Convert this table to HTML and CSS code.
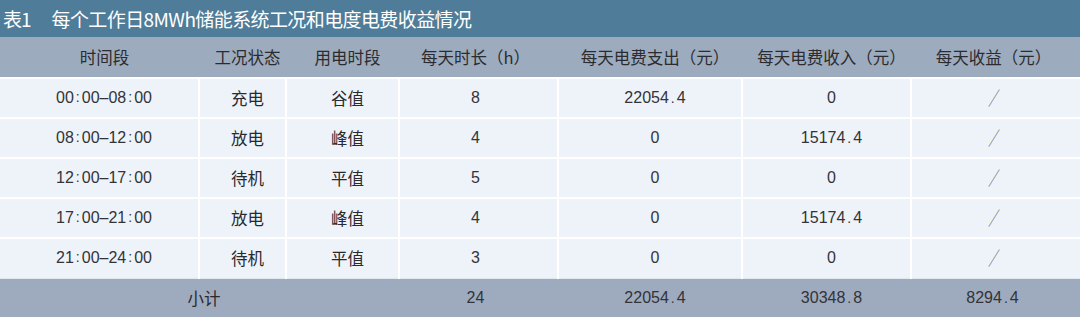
FILE: index.html
```html
<!DOCTYPE html>
<html lang="zh-CN">
<head>
<meta charset="utf-8">
<title>表1</title>
<link rel="stylesheet" href="styles.css">
</head>
<body>
<div class="sheet">
  <div class="caption"><span class="cap-no">表1</span><span class="cap-text">每个工作日8MWh储能系统工况和电度电费收益情况</span></div>
  <table class="grid">
    <colgroup>
      <col class="c1"><col class="c2"><col class="c3"><col class="c4"><col class="c5"><col class="c6"><col class="c7">
    </colgroup>
    <thead>
      <tr><th>时间段</th><th>工况状态</th><th>用电时段</th><th>每天时长（h）</th><th>每天电费支出（元）</th><th>每天电费收入（元）</th><th>每天收益（元）</th></tr>
    </thead>
    <tbody>
      <tr><td class="num">00<span class="colon">:</span>00–08<span class="colon">:</span>00</td><td class="zh">充电</td><td class="zh">谷值</td><td class="num">8</td><td class="num">22054<span class="dot">.</span>4</td><td class="num">0</td><td class="na"><span class="slash">／</span></td></tr>
      <tr><td class="num">08<span class="colon">:</span>00–12<span class="colon">:</span>00</td><td class="zh">放电</td><td class="zh">峰值</td><td class="num">4</td><td class="num">0</td><td class="num">15174<span class="dot">.</span>4</td><td class="na"><span class="slash">／</span></td></tr>
      <tr><td class="num">12<span class="colon">:</span>00–17<span class="colon">:</span>00</td><td class="zh">待机</td><td class="zh">平值</td><td class="num">5</td><td class="num">0</td><td class="num">0</td><td class="na"><span class="slash">／</span></td></tr>
      <tr><td class="num">17<span class="colon">:</span>00–21<span class="colon">:</span>00</td><td class="zh">放电</td><td class="zh">峰值</td><td class="num">4</td><td class="num">0</td><td class="num">15174<span class="dot">.</span>4</td><td class="na"><span class="slash">／</span></td></tr>
      <tr><td class="num">21<span class="colon">:</span>00–24<span class="colon">:</span>00</td><td class="zh">待机</td><td class="zh">平值</td><td class="num">3</td><td class="num">0</td><td class="num">0</td><td class="na"><span class="slash">／</span></td></tr>
    </tbody>
    <tfoot>
      <tr><td colspan="3" class="zh f1">小计</td><td class="num f4">24</td><td class="num f5">22054<span class="dot">.</span>4</td><td class="num f6">30348<span class="dot">.</span>8</td><td class="num f7">8294<span class="dot">.</span>4</td></tr>
    </tfoot>
  </table>
</div>
</body>
</html>
```
FILE: styles.css
```css
html, body {
  margin: 0;
  padding: 0;
  background: #eef3fa;
}
body {
  font-family: "Noto Sans CJK SC", "Noto Sans", sans-serif;
  color: #2f2f33;
}
.sheet {
  width: 1080px;
  height: 317px;
  overflow: hidden;
}
.caption {
  height: 37px;
  background: #4f7c99;
  color: #ffffff;
  font-size: 19px;
  display: flex;
  align-items: center;
  padding-left: 3px;
  box-sizing: border-box;
  gap: 21px;
}
.cap-no { letter-spacing: -1px; }
.cap-text { letter-spacing: -0.6px; }
.grid {
  width: 1080px;
  border-collapse: collapse;
  table-layout: fixed;
  font-size: 16px;
}
.c1 { width: 199px; }
.c2 { width: 87px; }
.c3 { width: 113px; }
.c4 { width: 159px; }
.c5 { width: 184px; }
.c6 { width: 169px; }
.c7 { width: 169px; }
.grid th {
  height: 40px;
  background: #9dabbe;
  font-weight: 400;
  font-size: 16.5px;
  padding: 0;
  text-align: center;
  color: #2c2c30;
}
.grid td {
  height: 40px;
  padding: 0;
  text-align: center;
  background: #eef3fa;
  border-top: 2px solid #ffffff;
  border-left: 2px solid #ffffff;
  box-sizing: border-box;
}
.grid tbody td:first-child { border-left: none; }
.grid th:nth-child(1), .grid tbody td:nth-child(1),
.grid th:nth-child(2), .grid tbody td:nth-child(2),
.grid th:nth-child(3), .grid tbody td:nth-child(3),
.grid th:nth-child(5), .grid tbody td:nth-child(5),
.grid th:nth-child(6), .grid tbody td:nth-child(6) {
  padding-left: 10px;
}
.grid th:nth-child(4), .grid tbody td:nth-child(4) { padding-right: 6px; }
.grid th:nth-child(7), .grid tbody td:nth-child(7) { padding-right: 4px; }
.grid td.zh {
  font-family: "Noto Sans CJK SC", sans-serif;
  font-size: 16.5px;
  color: #2a2a2e;
}
.grid td.num {
  font-family: "Liberation Sans", "Noto Sans CJK SC", sans-serif;
  font-size: 16px;
  color: #333338;
}
.colon {
  margin: 0 2px;
  font-size: 14px;
  position: relative;
  top: -1px;
}
.dot {
  margin: 0 2px;
  font-size: 14px;
}
.grid td.na {
  color: #5e5f66;
}
.slash {
  display: inline-block;
  font-size: 16px;
  font-weight: 300;
  transform: scale(0.75, 1.2);
}
.grid tfoot td {
  background: #9eabbe;
  border-left: none;
  border-top: 1px solid #dfe6ef;
  height: 40px;
}
.grid tfoot td.f1 { padding-left: 9px; }
.grid tfoot td.f4 { padding-right: 6px; }
.grid tfoot td.f5 { padding-left: 10px; }
.grid tfoot td.f6 { padding-left: 10px; }
.grid tfoot td.f7 { padding-right: 6px; }
```
